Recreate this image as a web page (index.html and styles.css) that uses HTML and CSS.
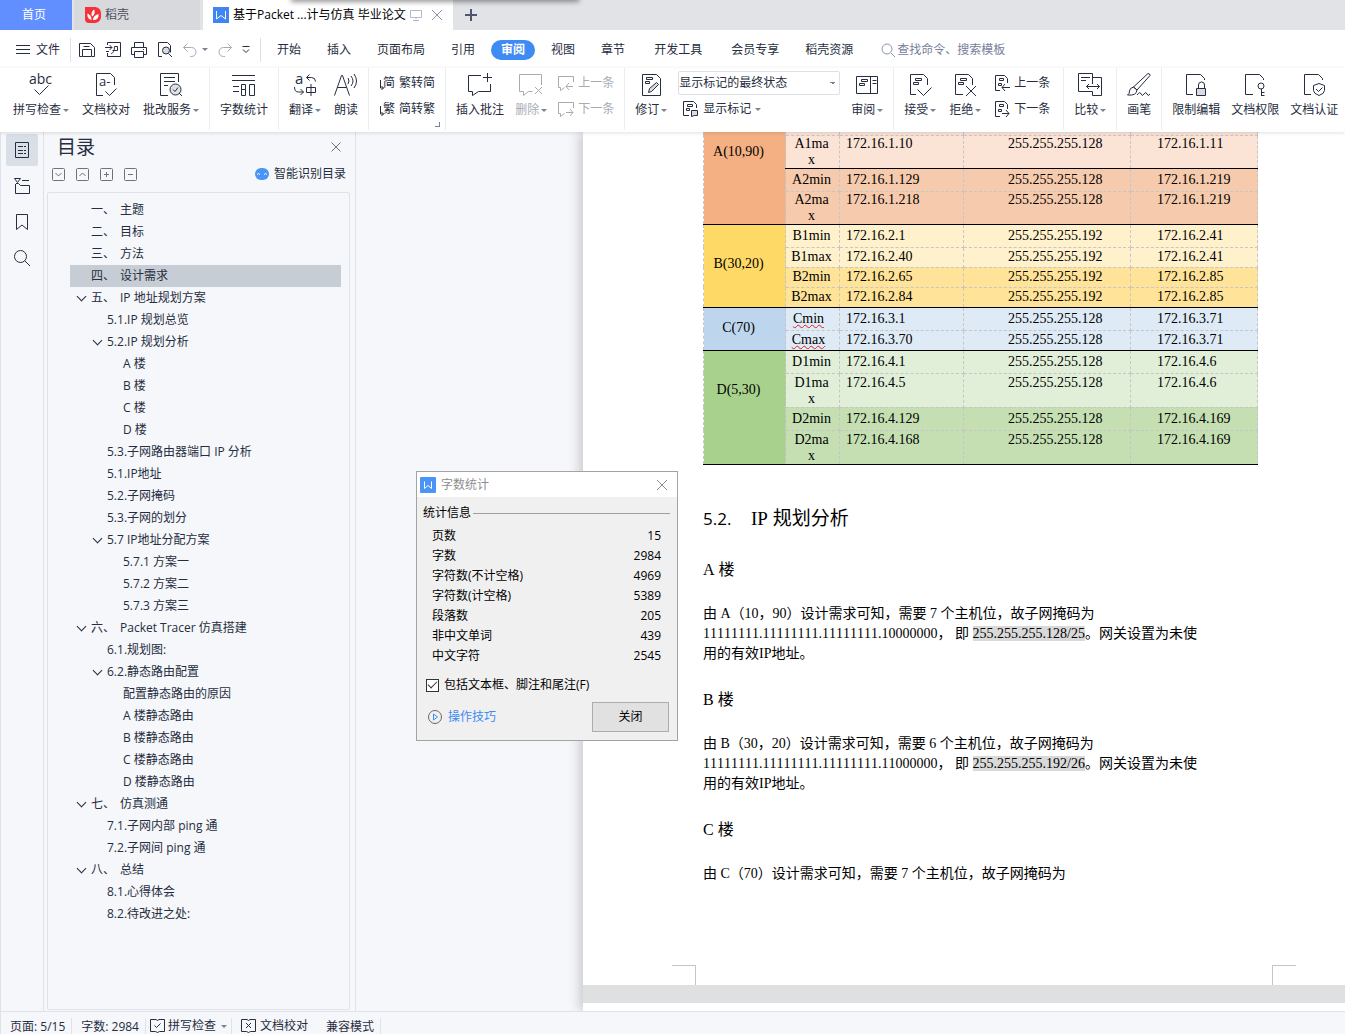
FILE: index.html
```html
<!DOCTYPE html>
<html lang="zh-CN">

<head>
    <meta charset="UTF-8">
    <meta name="viewport" content="width=device-width, initial-scale=1.0">
    <title>基于Packet ...计与仿真 毕业论文</title>
    <link rel="stylesheet" href="styles.css">
</head>

<body>
    <div class="window-edge"></div>

    <header>
        <div class="tabs">
            <button class="tab tab-home">首页</button>
            <button class="tab tab-docer">
                <svg width="16" height="16" viewBox="0 0 16 16"><path d="M0 0h10a6 6 0 0 1 6 6v4a6 6 0 0 1-6 6H4a4 4 0 0 1-4-4z" fill="#f5323c" stroke="none"/><path d="M6.500 13C3 12 2 9 2.500 6.500c2.500 1 4 3 4 6.500zM7 9.500C6 7 6.500 4.500 9 2.500c1.500 3 .5 5.500-2 7zM8 13c0-3 2-5 5.500-6 .5 4-1.500 6-5.500 6z" fill="#fff" stroke="none"/></svg>
                稻壳
            </button>
            <button class="tab tab-active">
                <svg width="16" height="16" viewBox="0 0 16 16"><path d="M0 0h16v16H0z" fill="#3f86f2" stroke="none"/><path d="M3.500 4v8L8 8.500l4.500 3.500V4" stroke="#fff"/></svg>
                <span class="tab-title">基于Packet ...计与仿真 毕业论文</span>
                <svg class="tab-screen" width="12" height="12" viewBox="0 0 12 12"><path d="M.5 1.500h11v7H.5zM6 8.500v2M3 11.500h6"/></svg>
                <svg class="tab-close" width="12" height="12" viewBox="0 0 12 12"><path d="M1 1l10 10M11 1L1 11"/></svg>
            </button>
            <button class="tab-new" aria-label="新建"><svg width="12" height="12" viewBox="0 0 12 12"><path d="M6 0v12M0 6h12" stroke-width="2"/></svg></button>
        </div>

        <nav class="menu">
            <button class="file-btn">
                <svg width="14" height="11" viewBox="0 0 14 11"><path d="M0 1.500h14M0 5.500h14M0 9.500h14"/></svg>
                文件
            </button>
            <div class="quick">
                <button aria-label="保存"><svg width="16" height="16" viewBox="0 0 16 16"><path d="M.5 1.500h11l4 4v9H13M3 14.500H.5v-13M3.500 14.500v-7h9v7zM4.500 4.500h6"/></svg></button>
                <button aria-label="输出为PDF"><svg width="16" height="16" viewBox="0 0 16 16"><path d="M2.500 3V.5h13v14h-13V11M0 5.500h7M4.500 3L7 5.500 4.500 8M6 11.500c2 0 3.500-3 3.500-7h3v4h-5M1 9.500h3"/></svg></button>
                <button aria-label="打印"><svg width="16" height="16" viewBox="0 0 16 16"><path d="M3.500 5V.5h9V5M3.500 12.500h-3v-7h15v7h-3M3.500 9.500h9v6h-9zM12 7.500h1"/></svg></button>
                <button aria-label="打印预览"><svg width="16" height="16" viewBox="0 0 16 16"><path d="M5 14.500H1.500V.5h9l3 3v7"/><circle cx="9" cy="8.500" r="3.500" fill="#d9dbe0"/><path d="M11.500 11.500l3.500 3.500"/></svg></button>
                <button class="faded undo" aria-label="撤销"><svg width="14" height="14" viewBox="0 0 14 14"><path d="M4.500.5l-4 4 4 4M.5 4.500h8a4.500 4.500 0 0 1 0 9H7"/></svg></button>
                <i class="caret"></i>
                <button class="faded" aria-label="恢复"><svg width="14" height="14" viewBox="0 0 14 14"><path d="M9.500.5l4 4-4 4M13.500 4.500h-8a4.500 4.500 0 0 0 0 9H7"/></svg></button>
                <button aria-label="自定义"><svg width="8" height="8" viewBox="0 0 8 8"><path d="M.5.500h7M1 3.500l3 3 3-3"/></svg></button>
            </div>
            <div class="menu-tabs">
                <button>开始</button>
                <button>插入</button>
                <button>页面布局</button>
                <button>引用</button>
                <button class="current">审阅</button>
                <button>视图</button>
                <button>章节</button>
                <button class="wide">开发工具</button>
                <button class="wide">会员专享</button>
                <button>稻壳资源</button>
            </div>
            <label class="search">
                <svg width="14" height="14" viewBox="0 0 14 14"><circle cx="6" cy="6" r="5"/><path d="M10 10l4 4"/></svg>
                <input type="text" placeholder="查找命令、搜索模板">
            </label>
        </nav>

        <div class="ribbon">
            <div class="group">
                <button class="big">
                    <svg width="24" height="24" viewBox="0 0 24 24"><text x="0" y="11" font-size="14">abc</text><path d="M5.500 16.500l5 5 9-9"/></svg>
                    <span>拼写检查<i class="caret"></i></span>
                </button>
                <button class="big">
                    <svg width="24" height="24" viewBox="0 0 24 24"><path d="M9 22.500H2.500V.5h14l4 4V12M11.500 18.500l4 4 7-7"/><text x="5" y="13" font-size="13">a-</text></svg>
                    <span>文档校对</span>
                </button>
                <button class="big">
                    <svg width="24" height="24" viewBox="0 0 24 24"><path d="M9 22.500H1.500V.5h18V9M5 4.500h11M5 8.500h11M5 12.500h4"/><circle cx="16.500" cy="16.500" r="5.500" fill="#e0e2e6"/><path d="M14 16.500l2 2 3-4M20 20l3 3"/></svg>
                    <span>批改服务<i class="caret"></i></span>
                </button>
            </div>
            <div class="group">
                <button class="big">
                    <svg width="24" height="24" viewBox="0 0 24 24"><path d="M0 2.500h23M0 7.500h23M1 13.500h6M1 18.500h6M9.500 11.500h4v11h-4zM9.500 16.500h4M17.500 11.500h5v11h-5z"/></svg>
                    <span>字数统计</span>
                </button>
            </div>
            <div class="group">
                <button class="big">
                    <svg width="24" height="24" viewBox="0 0 24 24"><text x="2" y="11" font-size="15">a</text><path d="M16.500 1.500l-3 3 3 3M13.500 4.500h5q4 0 4 4M1.500 14q0 5 4 5h5M7.500 16l3 3-3 3M13.500 14.500h9v5h-9zM18 11v12"/></svg>
                    <span>翻译<i class="caret"></i></span>
                </button>
                <button class="big">
                    <svg width="24" height="24" viewBox="0 0 24 24"><path d="M.5 22.500l7-20h1l7 20M3.500 14.500h9M14 5q2 3 0 6M17 3q4 5 0 10M20 1q5 7 0 14"/></svg>
                    <span>朗读</span>
                </button>
            </div>
            <div class="group">
                <div class="stack">
                    <button class="small"><svg width="16" height="16" viewBox="0 0 16 16"><text x="4" y="12" font-size="12">简</text><path d="M1.500 5v8h3M2.500 11l2 2-2 2"/></svg>繁转简</button>
                    <button class="small"><svg width="16" height="16" viewBox="0 0 16 16"><text x="4" y="12" font-size="12">繁</text><path d="M1.500 5v8h3M2.500 11l2 2-2 2"/></svg>简转繁</button>
                </div>
                <i class="corner"></i>
            </div>
            <div class="group tight">
                <button class="big">
                    <svg width="24" height="24" viewBox="0 0 24 24"><path d="M13 2.500H.5v16h4v4l6-4h12V11M19.500 0v9M15 4.500h9"/></svg>
                    <span>插入批注</span>
                </button>
                <button class="big faded">
                    <svg width="24" height="24" viewBox="0 0 24 24"><path d="M22.500 12V1.500H.5v17h4v4l5-4h4M16 14l7 7M23 14l-7 7"/></svg>
                    <span>删除<i class="caret"></i></span>
                </button>
                <div class="stack">
                    <button class="small faded"><svg width="16" height="16" viewBox="0 0 16 16"><path d="M15.500 7V1.500H.5v11h2v3l4-3M15 11.500H8M11 8l-3 3.500 3 3.500"/></svg>上一条</button>
                    <button class="small faded"><svg width="16" height="16" viewBox="0 0 16 16"><path d="M15.500 7V1.500H.5v11h2v3l4-3M8 11.500h7M12 8l3 3.500-3 3.500"/></svg>下一条</button>
                </div>
            </div>
            <div class="group tight">
                <button class="big">
                    <svg width="24" height="24" viewBox="0 0 24 24"><path d="M3.500 1.500h14l4 4v17h-18zM7.500 4.500h6v2h-6zM6.500 8.500h4v2h-4z"/><path d="M9.500 19.500l1-4 7-6 2 2-7 7z" fill="#d9dbe0"/></svg>
                    <span>修订<i class="caret"></i></span>
                </button>
                <div class="stack">
                    <select aria-label="显示状态">
                        <option>显示标记的最终状态</option>
                    </select>
                    <button class="small inset"><svg width="16" height="16" viewBox="0 0 16 16"><path d="M6 14.500H.5V.5h10l3 3V7M4.500 3.500h5v2h-5zM3.500 7.500h3v2h-3z"/><path d="M8.500 9.500h6v5h-3l-3 1z" fill="#d9dbe0"/></svg>显示标记<i class="caret"></i></button>
                </div>
                <button class="big">
                    <svg width="24" height="24" viewBox="0 0 24 24"><path d="M1.500 3.500h21v17h-21zM15.500 3v17M6.500 6.500h6v2h-6zM4.500 10.500h5v2h-5zM17.500 7.500h4M17.500 10.500h4"/></svg>
                    <span>审阅<i class="caret"></i></span>
                </button>
            </div>
            <div class="group loose">
                <button class="big">
                    <svg width="24" height="24" viewBox="0 0 24 24"><path d="M8 21.500H2.500V1.500h13l4 4V12M7.500 5.500h6v2h-6zM5.500 9.500h5v2h-5zM9.500 16.500l6 6 8-8"/></svg>
                    <span>接受<i class="caret"></i></span>
                </button>
                <button class="big">
                    <svg width="24" height="24" viewBox="0 0 24 24"><path d="M10 21.500H2.500V1.500h13l4 4V12M7.500 5.500h6v2h-6zM5.500 9.500h5v2h-5zM13 13l10 10M23 13L13 23"/></svg>
                    <span>拒绝<i class="caret"></i></span>
                </button>
                <div class="stack">
                    <button class="small"><svg width="16" height="16" viewBox="0 0 16 16"><path d="M6 15.500H1.500V.5h9l3 3V8M5.500 3.500h4v2h-4zM4.500 8.500h3v2h-3zM16 12.500H8M11 9l-3 3.500 3 3.500"/></svg>上一条</button>
                    <button class="small"><svg width="16" height="16" viewBox="0 0 16 16"><path d="M6 15.500H1.500V.5h9l3 3V8M5.500 3.500h4v2h-4zM4.500 8.500h3v2h-3zM8 12.500h7M12 9l3 3.500-3 3.500"/></svg>下一条</button>
                </div>
            </div>
            <div class="group">
                <button class="big">
                    <svg width="24" height="24" viewBox="0 0 24 24"><path d="M14.500 11V.5H.5v18h14v4h9v-18h-9M3 4.500h9M3 7.500h5M8.500 13.500h13M11 11l-2.500 2.500L11 16M19 11l2.500 2.500L19 16"/></svg>
                    <span>比较<i class="caret"></i></span>
                </button>
            </div>
            <div class="group">
                <button class="big">
                    <svg width="24" height="24" viewBox="0 0 24 24"><path d="M6.500 14L21 .5q2 0 2 2L10 17zM6.500 14q-4 1-4 4t-2 4q9 1 9.500-5zM10 22q3-4 4-1t3 0 3 0 3 0"/></svg>
                    <span>画笔</span>
                </button>
            </div>
            <div class="group tight">
                <button class="big">
                    <svg width="24" height="24" viewBox="0 0 24 24"><path d="M9 21.500H2.500V1.500h14l4 4V7M14.500 15v-3a3 3 0 0 1 6 0v3"/><path d="M12.500 15.500h9v7h-9z" fill="#d9dbe0"/></svg>
                    <span>限制编辑</span>
                </button>
                <button class="big">
                    <svg width="24" height="24" viewBox="0 0 24 24"><path d="M10 21.500H2.500V1.500h14l4 4V7M18.500 16v7M18.500 19.500h3M18.500 22.500h3"/><circle cx="18" cy="13" r="3"/></svg>
                    <span>文档权限</span>
                </button>
                <button class="big">
                    <svg width="24" height="24" viewBox="0 0 24 24"><path d="M9 21.500H2.500V1.500h14l4 4V7M17 10.500l5.500 2v5q0 3-5.500 5-5.500-2-5.500-5v-5zM14 16l2.500 2.500 4-4"/></svg>
                    <span>文档认证</span>
                </button>
            </div>
        </div>
    </header>

    <main>
        <aside class="rail">
            <button class="active" aria-label="目录"><svg width="16" height="16" viewBox="0 0 16 16"><path d="M1.500.5h13v15h-13zM4 4.500h5M10 4.500h2M4 8.500h5M10 8.500h2M4 11.500h5M10 11.500h2"/></svg></button>
            <button aria-label="章节导航"><svg width="16" height="16" viewBox="0 0 16 16"><path d="M.5.500h6l-3 4zM8 2.500h7M1.500 6v9.500h14v-8h-9l-2-2H2"/></svg></button>
            <button aria-label="书签"><svg width="16" height="16" viewBox="0 0 16 16"><path d="M2.500.5h11v15L8 11l-5.500 4.500z"/></svg></button>
            <button aria-label="查找"><svg width="16" height="16" viewBox="0 0 16 16"><circle cx="6.500" cy="6.500" r="6"/><path d="M11 11l5 5"/></svg></button>
        </aside>

        <section class="outline">
            <div class="outline-head">
                <h1>目录</h1>
                <button aria-label="关闭目录"><svg width="10" height="10" viewBox="0 0 10 10"><path d="M.5.500l9 9M9.500.500l-9 9"/></svg></button>
            </div>
            <div class="outline-tools">
                <button aria-label="展开"><svg width="13" height="13" viewBox="0 0 13 13"><rect x=".5" y=".5" width="12" height="12" rx="1"/><path d="M3.500 5l3 3 3-3"/></svg></button>
                <button aria-label="收起"><svg width="13" height="13" viewBox="0 0 13 13"><rect x=".5" y=".5" width="12" height="12" rx="1"/><path d="M3.500 8l3-3 3 3"/></svg></button>
                <button aria-label="全部展开"><svg width="13" height="13" viewBox="0 0 13 13"><rect x=".5" y=".5" width="12" height="12" rx="1"/><path d="M4 6.500h5M6.500 4v5"/></svg></button>
                <button aria-label="全部收起"><svg width="13" height="13" viewBox="0 0 13 13"><rect x=".5" y=".5" width="12" height="12" rx="1"/><path d="M4 6.500h5"/></svg></button>
                <button class="smart"><svg width="14" height="12" viewBox="0 0 14 12"><rect width="14" height="12" rx="6" fill="#4a94f7" stroke="none"/><path d="M2 6.500q1.500-2 3 0M9 6.500q1.500-2 3 0" stroke="#fff"/></svg>智能识别目录</button>
            </div>
            <ul class="toc">
                <li><i class="fold"></i><a href="#"><b>一、</b>主题</a></li>
                <li><i class="fold"></i><a href="#"><b>二、</b>目标</a></li>
                <li><i class="fold"></i><a href="#"><b>三、</b>方法</a></li>
                <li class="selected"><i class="fold"></i><a href="#"><b>四、</b>设计需求</a></li>
                <li><i class="fold open"></i><a href="#"><b>五、</b>IP 地址规划方案</a></li>
                <li class="level-2"><i class="fold"></i><a href="#">5.1.IP 规划总览</a></li>
                <li class="level-2"><i class="fold open"></i><a href="#">5.2.IP 规划分析</a></li>
                <li class="level-3"><i class="fold"></i><a href="#">A 楼</a></li>
                <li class="level-3"><i class="fold"></i><a href="#">B 楼</a></li>
                <li class="level-3"><i class="fold"></i><a href="#">C 楼</a></li>
                <li class="level-3"><i class="fold"></i><a href="#">D 楼</a></li>
                <li class="level-2"><i class="fold"></i><a href="#">5.3.子网路由器端口 IP 分析</a></li>
                <li class="level-2"><i class="fold"></i><a href="#">5.1.IP地址</a></li>
                <li class="level-2"><i class="fold"></i><a href="#">5.2.子网掩码</a></li>
                <li class="level-2"><i class="fold"></i><a href="#">5.3.子网的划分</a></li>
                <li class="level-2"><i class="fold open"></i><a href="#">5.7 IP地址分配方案</a></li>
                <li class="level-3"><i class="fold"></i><a href="#">5.7.1 方案一</a></li>
                <li class="level-3"><i class="fold"></i><a href="#">5.7.2 方案二</a></li>
                <li class="level-3"><i class="fold"></i><a href="#">5.7.3 方案三</a></li>
                <li><i class="fold open"></i><a href="#"><b>六、</b>Packet Tracer 仿真搭建</a></li>
                <li class="level-2"><i class="fold"></i><a href="#">6.1.规划图:</a></li>
                <li class="level-2"><i class="fold open"></i><a href="#">6.2.静态路由配置</a></li>
                <li class="level-3"><i class="fold"></i><a href="#">配置静态路由的原因</a></li>
                <li class="level-3"><i class="fold"></i><a href="#">A 楼静态路由</a></li>
                <li class="level-3"><i class="fold"></i><a href="#">B 楼静态路由</a></li>
                <li class="level-3"><i class="fold"></i><a href="#">C 楼静态路由</a></li>
                <li class="level-3"><i class="fold"></i><a href="#">D 楼静态路由</a></li>
                <li><i class="fold open"></i><a href="#"><b>七、</b>仿真测通</a></li>
                <li class="level-2"><i class="fold"></i><a href="#">7.1.子网内部 ping 通</a></li>
                <li class="level-2"><i class="fold"></i><a href="#">7.2.子网间 ping 通</a></li>
                <li><i class="fold open"></i><a href="#"><b>八、</b>总结</a></li>
                <li class="level-2"><i class="fold"></i><a href="#">8.1.心得体会</a></li>
                <li class="level-2"><i class="fold"></i><a href="#">8.2.待改进之处:</a></li>
            </ul>
        </section>

        <div class="canvas">
            <div class="pages">
                <article class="page">
                    <div class="page-body">
                        <table class="ip-table">
                            <colgroup>
                                <col class="col-building">
                                <col class="col-name">
                                <col class="col-ip">
                                <col class="col-mask">
                                <col class="col-gateway">
                            </colgroup>
                            <tbody class="orange">
                                <tr class="sliver light"><th rowspan="4">A(10,90)</th><td></td><td></td><td></td><td></td></tr>
                                <tr class="tall light"><td>A1ma<br>x</td><td>172.16.1.10</td><td>255.255.255.128</td><td>172.16.1.11</td></tr>
                                <tr class="lead ruled"><td>A2min</td><td>172.16.1.129</td><td>255.255.255.128</td><td>172.16.1.219</td></tr>
                                <tr class="tall"><td>A2ma<br>x</td><td>172.16.1.218</td><td>255.255.255.128</td><td>172.16.1.219</td></tr>
                            </tbody>
                            <tbody class="yellow">
                                <tr class="lead light"><th rowspan="4">B(30,20)</th><td>B1min</td><td>172.16.2.1</td><td>255.255.255.192</td><td>172.16.2.41</td></tr>
                                <tr class="light"><td>B1max</td><td>172.16.2.40</td><td>255.255.255.192</td><td>172.16.2.41</td></tr>
                                <tr><td>B2min</td><td>172.16.2.65</td><td>255.255.255.192</td><td>172.16.2.85</td></tr>
                                <tr><td>B2max</td><td>172.16.2.84</td><td>255.255.255.192</td><td>172.16.2.85</td></tr>
                            </tbody>
                            <tbody class="blue">
                                <tr class="lead"><th rowspan="2">C(70)</th><td><span class="typo">Cmin</span></td><td>172.16.3.1</td><td>255.255.255.128</td><td>172.16.3.71</td></tr>
                                <tr><td><span class="typo">Cmax</span></td><td>172.16.3.70</td><td>255.255.255.128</td><td>172.16.3.71</td></tr>
                            </tbody>
                            <tbody class="green">
                                <tr class="lead light"><th rowspan="4">D(5,30)</th><td>D1min</td><td>172.16.4.1</td><td>255.255.255.128</td><td>172.16.4.6</td></tr>
                                <tr class="tall light"><td>D1ma<br>x</td><td>172.16.4.5</td><td>255.255.255.128</td><td>172.16.4.6</td></tr>
                                <tr class="lead"><td>D2min</td><td>172.16.4.129</td><td>255.255.255.128</td><td>172.16.4.169</td></tr>
                                <tr class="tall"><td>D2ma<br>x</td><td>172.16.4.168</td><td>255.255.255.128</td><td>172.16.4.169</td></tr>
                            </tbody>
                        </table>

                        <h2><span class="num">5.2.</span>IP 规划分析</h2>
                        <h3>A 楼</h3>
                        <p>由 A（10，90）设计需求可知，需要 7 个主机位，故子网掩码为11111111.11111111.11111111.10000000， 即 <mark>255.255.255.128/25</mark>。网关设置为未使用的有效IP地址。</p>
                        <h3>B 楼</h3>
                        <p>由 B（30，20）设计需求可知，需要 6 个主机位，故子网掩码为11111111.11111111.11111111.11000000， 即 <mark>255.255.255.192/26</mark>。网关设置为未使用的有效IP地址。</p>
                        <h3>C 楼</h3>
                        <p>由 C（70）设计需求可知，需要 7 个主机位，故子网掩码为</p>
                    </div>
                    <div class="crop-marks"><i></i><i></i></div>
                </article>
                <article class="page next-page"></article>
            </div>
        </div>
    </main>

    <footer>
        <span class="status">页面: 5/15</span>
        <span class="status">字数: 2984</span>
        <button class="status spell"><svg width="15" height="14" viewBox="0 0 15 14"><path d="M6 .5H.5v12h5l2 1 2-1h5V.5H9l-1.500 1zM4.500 6.500l2 2 4-4"/></svg>拼写检查<i class="caret"></i></button>
        <button class="status proof"><svg width="15" height="14" viewBox="0 0 15 14"><path d="M6 .5H.5v12h5l2 1 2-1h5V.5H9l-1.500 1zM5 4l5 5M10 4L5 9"/></svg>文档校对</button>
        <span class="status">兼容模式</span>
    </footer>

    <div class="dialog" role="dialog" aria-labelledby="dialogTitle">
        <div class="dialog-title">
            <svg width="16" height="16" viewBox="0 0 16 16"><rect width="16" height="16" rx="1" fill="#4a94f7" stroke="none"/><path d="M4.500 4.500v7L8 8.500l3.500 3v-7" stroke="#fff"/></svg>
            <span id="dialogTitle">字数统计</span>
            <button aria-label="关闭窗口"><svg width="12" height="12" viewBox="0 0 12 12"><path d="M1 1l10 10M11 1L1 11"/></svg></button>
        </div>
        <div class="dialog-body">
            <div class="legend">统计信息</div>
            <table class="stats">
                <tr><th>页数</th><td>15</td></tr>
                <tr><th>字数</th><td>2984</td></tr>
                <tr><th>字符数(不计空格)</th><td>4969</td></tr>
                <tr><th>字符数(计空格)</th><td>5389</td></tr>
                <tr><th>段落数</th><td>205</td></tr>
                <tr><th>非中文单词</th><td>439</td></tr>
                <tr><th>中文字符</th><td>2545</td></tr>
            </table>
            <div class="check-row">
                <input type="checkbox" id="includeNotes" checked>
                <label for="includeNotes">包括文本框、脚注和尾注(F)</label>
            </div>
            <div class="dialog-foot">
                <a href="#"><svg width="14" height="14" viewBox="0 0 14 14"><circle cx="7" cy="7" r="6.500" stroke="#666"/><path d="M5.500 4v6L9.500 7z"/></svg>操作技巧</a>
                <button>关闭</button>
            </div>
        </div>
    </div>
</body>

</html>
```

FILE: styles.css
```css
* {
    box-sizing: border-box;
}

body {
    margin: 0;
    height: 100vh;
    display: flex;
    flex-direction: column;
    overflow: hidden;
    position: relative;
    font: 12px/16px "Open Sans", "Noto Sans CJK SC", sans-serif;
    color: #262d40;
    background-color: #f5f7fa;
}

button,
input,
select {
    font: inherit;
    color: inherit;
    background: none;
    border: none;
    margin: 0;
    padding: 0;
}

button {
    display: flex;
    align-items: center;
    white-space: nowrap;
    flex-shrink: 0;
}

svg {
    display: block;
    flex-shrink: 0;
    overflow: visible;
    fill: none;
    stroke: currentColor;
}

svg text {
    fill: currentColor;
    stroke: none;
}

a {
    color: inherit;
    text-decoration: none;
}

.caret {
    display: inline-block;
    width: 6px;
    margin-left: 2px;
    border: solid transparent;
    border-width: 3px 3px 0;
    border-top-color: #7a8296;
    vertical-align: middle;
}

.faded {
    color: #a8abb3;
}

/* Shadow of the window sitting above this one */
.window-edge {
    position: absolute;
    top: -6px;
    left: 293px;
    width: 284px;
    height: 6px;
    box-shadow: 0 0 5px 2px rgba(0, 0, 0, 0.4);
    z-index: 3;
}

/* Tabs */
.tabs {
    display: flex;
    height: 30px;
    background-color: #e2e3e7;
}

.tab {
    padding: 0 11px;
    gap: 4px;
}

.tab-home {
    width: 72px;
    padding: 0 22px;
    margin-right: 2px;
    color: #fff;
    background-color: #628fff;
}

.tab-docer {
    width: 126px;
    margin-right: 3px;
    color: #4b5060;
    background-color: #d8d9dc;
}

.tab-active {
    width: 250px;
    padding: 0 10px;
    color: #000;
    background-color: #fff;
}

.tab-screen {
    color: #b2bacb;
}

.tab-close {
    margin-left: auto;
    color: #8c96ac;
}

.tab-new {
    padding: 0 12px;
    color: #4c566e;
}

/* Menu */
.menu {
    display: flex;
    align-items: center;
    height: 38px;
    padding-top: 1px;
    background-color: #fff;
}

.file-btn {
    gap: 6px;
    padding: 0 10px 0 16px;
    height: 24px;
    border-right: 1px solid #dcdfe5;
}

.quick {
    display: flex;
    align-items: center;
    gap: 10px;
    height: 24px;
    padding: 0 10px 0 8px;
    border-right: 1px solid #dcdfe5;
}

.quick .caret {
    margin-left: -5px;
}

.menu-tabs {
    display: flex;
    gap: 6px;
    padding-left: 6px;
}

.menu-tabs button {
    height: 20px;
    padding: 0 10px;
}

.menu-tabs .wide {
    margin-left: 3px;
}

.menu-tabs .current {
    color: #fff;
    font-weight: bold;
    background-color: #3f8bf4;
    border-radius: 10px;
}

.search {
    display: flex;
    align-items: center;
    flex: 1;
    gap: 2px;
    padding-left: 18px;
    color: #8c96ac;
}

.search input {
    flex: 1;
    min-width: 0;
}

.search input::placeholder {
    color: #76809a;
    opacity: 1;
}

/* Ribbon */
.ribbon {
    display: flex;
    height: 64px;
    padding: 0 0 2px 3px;
    background-color: #fff;
    box-shadow: 0 1px 4px rgba(0, 0, 0, 0.12);
    position: relative;
    z-index: 1;
}

.group {
    display: flex;
    align-items: flex-start;
    gap: 13px;
    padding: 0 10px;
    border-right: 1px solid #ebedf0;
    position: relative;
    flex-shrink: 0;
}

.group:last-child {
    border-right: none;
}

.group.tight {
    gap: 11px;
}

.group.loose {
    padding-right: 13px;
}

.big {
    flex-direction: column;
    gap: 5px;
    padding-top: 5px;
}

.stack {
    display: flex;
    flex-direction: column;
    gap: 2px;
    padding-top: 3px;
}

.small {
    gap: 4px;
    height: 24px;
}

.small.inset {
    padding-left: 5px;
}

.small .caret {
    margin-left: 0;
}

.stack select {
    width: 162px;
    height: 24px;
    border: 1px solid #dcdfe5;
    border-radius: 2px;
    appearance: none;
    background: conic-gradient(from -45deg at 50% 100%, #7a8296 90deg, transparent 0) 151px 10px / 6px 3px no-repeat;
}

.corner {
    position: absolute;
    right: 5px;
    bottom: 3px;
    width: 5px;
    height: 5px;
    border: solid #7a8296;
    border-width: 0 1px 1px 0;
}

/* Workspace */
main {
    display: flex;
    flex: 1;
    min-height: 0;
}

.rail {
    display: flex;
    flex-direction: column;
    gap: 4px;
    width: 44px;
    padding: 2px 5px;
    border: solid #dfe2e8;
    border-width: 0 1px;
    flex-shrink: 0;
}

.rail button {
    width: 32px;
    height: 32px;
    justify-content: center;
    border-radius: 2px;
}

.rail .active {
    background-color: #d9dfe7;
}

.outline {
    display: flex;
    flex-direction: column;
    width: 312px;
    padding: 0 5px 1px 3px;
    border-right: 1px solid #dfe2e8;
    flex-shrink: 0;
}

.outline-head {
    display: flex;
    align-items: center;
    justify-content: space-between;
    height: 30px;
    padding: 0 9px 0 10px;
    color: #6b7280;
}

.outline-head h1 {
    margin: 0;
    font-size: 19px;
    font-weight: normal;
    line-height: 28px;
    color: #262d40;
}

.outline-tools {
    display: flex;
    gap: 11px;
    height: 30px;
    padding: 0 4px 6px 5px;
    color: #6b7280;
}

.smart {
    gap: 5px;
    margin-left: auto;
    color: #262d40;
}

.toc {
    flex: 1;
    min-height: 0;
    margin: 0;
    padding: 6px 8px 6px 22px;
    list-style: none;
    border: 1px solid #dfe2e8;
    border-radius: 2px;
}

.toc li {
    display: flex;
    align-items: center;
    height: 22px;
}

.toc .level-2 {
    padding-left: 16px;
}

.toc .level-3 {
    padding-left: 32px;
}

.toc .selected {
    background-color: #c6cdd5;
}

.toc b {
    margin-right: 5px;
    font-weight: normal;
}

.fold {
    width: 21px;
    padding-left: 8px;
}

.fold.open::before {
    content: "";
    display: block;
    width: 6px;
    height: 6px;
    margin-bottom: 4px;
    border: solid #262d40;
    border-width: 0 1px 1px 0;
    transform: rotate(45deg);
}

/* Document */
.canvas {
    display: flex;
    flex: 1;
    min-width: 0;
    padding-left: 227px;
    overflow: hidden;
}

.pages {
    display: flex;
    flex-direction: column;
    gap: 18px;
    width: 801px;
    flex-shrink: 0;
    background: #dfe0e2;
    box-shadow: -3px 0 12px rgba(0, 0, 0, 0.2);
}

.page {
    display: flex;
    flex-direction: column;
    flex: 1;
    background-color: #fff;
    font-family: "Liberation Serif", "Noto Sans CJK SC", serif;
    font-size: 14px;
    font-kerning: none;
    color: #000;
}

.next-page {
    flex: 0 0 8px;
}

.page-body {
    padding: 0 120px;
}

.page p {
    max-width: 500px;
    margin: 0;
    line-height: 20px;
}

.page h2 {
    margin: 40px 0 27px;
    font-size: 19px;
    line-height: 28px;
    font-weight: normal;
}

.page .num {
    display: inline-block;
    width: 48px;
    font-family: "Open Sans", sans-serif;
    font-size: 17px;
}

.page h3 {
    margin: 26px 0 24px;
    font-size: 16px;
    line-height: 20px;
    font-weight: normal;
}

.page mark {
    color: inherit;
    background-color: #d9d9d9;
}

.crop-marks {
    display: flex;
    justify-content: space-between;
    margin-top: auto;
    padding: 0 88px 0 89px;
}

.crop-marks i {
    width: 24px;
    height: 20px;
    border: solid #c4c4c4;
    border-width: 1px 1px 0 0;
}

.crop-marks i + i {
    border-width: 1px 0 0 1px;
}

.ip-table {
    width: 554px;
    table-layout: fixed;
    border-collapse: collapse;
    line-height: 16px;
}

.col-building { width: 82px; }
.col-name { width: 54px; }
.col-ip { width: 124px; }
.col-mask { width: 167px; }
.col-gateway { width: 127px; }

.ip-table tbody {
    border-bottom: 1px solid #000;
}

.ip-table tr {
    height: 20px;
}

.ip-table .lead {
    height: 23px;
}

.ip-table .tall {
    height: 33px;
}

.ip-table .green .tall {
    height: 34px;
}

.ip-table .sliver {
    height: 3px;
}

.ip-table td,
.ip-table th {
    padding: 1px 0 0 6px;
    vertical-align: top;
    font-weight: normal;
    border: 1px dashed #c6c6c6;
}

.ip-table tbody tr:first-child > * {
    border-top: none;
}

.ip-table tbody tr:last-child td,
.ip-table th {
    border-bottom: 1px solid #000;
}

.ip-table .ruled td {
    border-top: 1px solid #000;
}

.ip-table td:nth-last-child(4) {
    padding: 1px 2px 0 0;
    text-align: center;
}

.ip-table .lead td,
.ip-table .lead td:nth-last-child(4) {
    padding-top: 3px;
}

.ip-table .orange .tall td,
.ip-table .sliver td {
    padding-top: 0;
}

.ip-table td:nth-last-child(2) {
    padding-left: 44px;
}

.ip-table td:last-child {
    padding-left: 26px;
}

.ip-table th {
    padding: 12px 12px 0 0;
}

.ip-table .yellow th,
.ip-table .green th {
    padding-top: 31px;
}

.orange th { background-color: #f4b083; }
.orange td { background-color: #f6caac; }
.orange .light td { background-color: #fbe3d6; }
.yellow th { background-color: #ffd966; }
.yellow td { background-color: #ffe399; }
.yellow .light td { background-color: #fff1cc; }
.blue th { background-color: #bdd5ed; }
.blue td { background-color: #deeaf6; }
.green th { background-color: #a8d18d; }
.green td { background-color: #c5dfb3; }
.green .light td { background-color: #e1efd9; }

.typo {
    margin-right: 6px;
    text-decoration: underline wavy #e02020 1px;
    text-decoration-skip-ink: none;
}

/* Status bar */
footer {
    display: flex;
    height: 23px;
    padding-top: 6px;
    border: solid #dfe2e8;
    border-width: 1px 0 0 1px;
}

.status {
    height: 16px;
    padding: 0 6px 0 9px;
    border-right: 1px solid #dfe2e8;
    line-height: 18px;
}

.status.spell {
    gap: 3px;
    padding: 0 4px;
}

.status.proof {
    gap: 4px;
    padding-right: 9px;
    border-right: none;
}

/* Word count dialog */
.dialog {
    position: absolute;
    top: 471px;
    left: 416px;
    width: 262px;
    color: #000;
    background-color: #f0f0f0;
    border: 1px solid #a3a3a3;
    z-index: 2;
}

.dialog-title {
    display: flex;
    align-items: center;
    gap: 5px;
    height: 25px;
    padding: 0 9px 0 3px;
    color: #8e8e8e;
    background-color: #fff;
}

.dialog-title button {
    margin-left: auto;
}

.dialog-body {
    padding: 8px 7px 8px 6px;
}

.legend {
    display: flex;
    align-items: center;
    gap: 2px;
}

.legend::after {
    content: "";
    flex: 1;
    border-top: 1px solid #a0a0a0;
}

.stats {
    width: 100%;
    margin-top: 5px;
    padding: 0 9px;
    border-spacing: 0;
}

.stats th,
.stats td {
    height: 20px;
    padding: 0;
    font-weight: normal;
    text-align: left;
}

.stats td {
    text-align: right;
}

.check-row {
    display: flex;
    align-items: center;
    gap: 5px;
    margin-top: 11px;
    padding-left: 3px;
}

.check-row input {
    width: 13px;
    height: 13px;
    display: grid;
    place-items: center;
    appearance: none;
    background-color: #fff;
    border: 1px solid #333;
}

.check-row input:checked::before {
    content: "";
    width: 8px;
    height: 4px;
    margin-bottom: 3px;
    border: solid #333;
    border-width: 0 0 1px 1px;
    transform: rotate(-45deg);
}

.dialog-foot {
    display: flex;
    align-items: center;
    justify-content: space-between;
    margin-top: 9px;
    padding: 0 1px 0 5px;
}

.dialog-foot a {
    display: flex;
    align-items: center;
    gap: 6px;
    color: #3f8bf4;
}

.dialog-foot button {
    justify-content: center;
    width: 77px;
    height: 30px;
    background-color: #e1e1e1;
    border: 1px solid #adadad;
}
```
